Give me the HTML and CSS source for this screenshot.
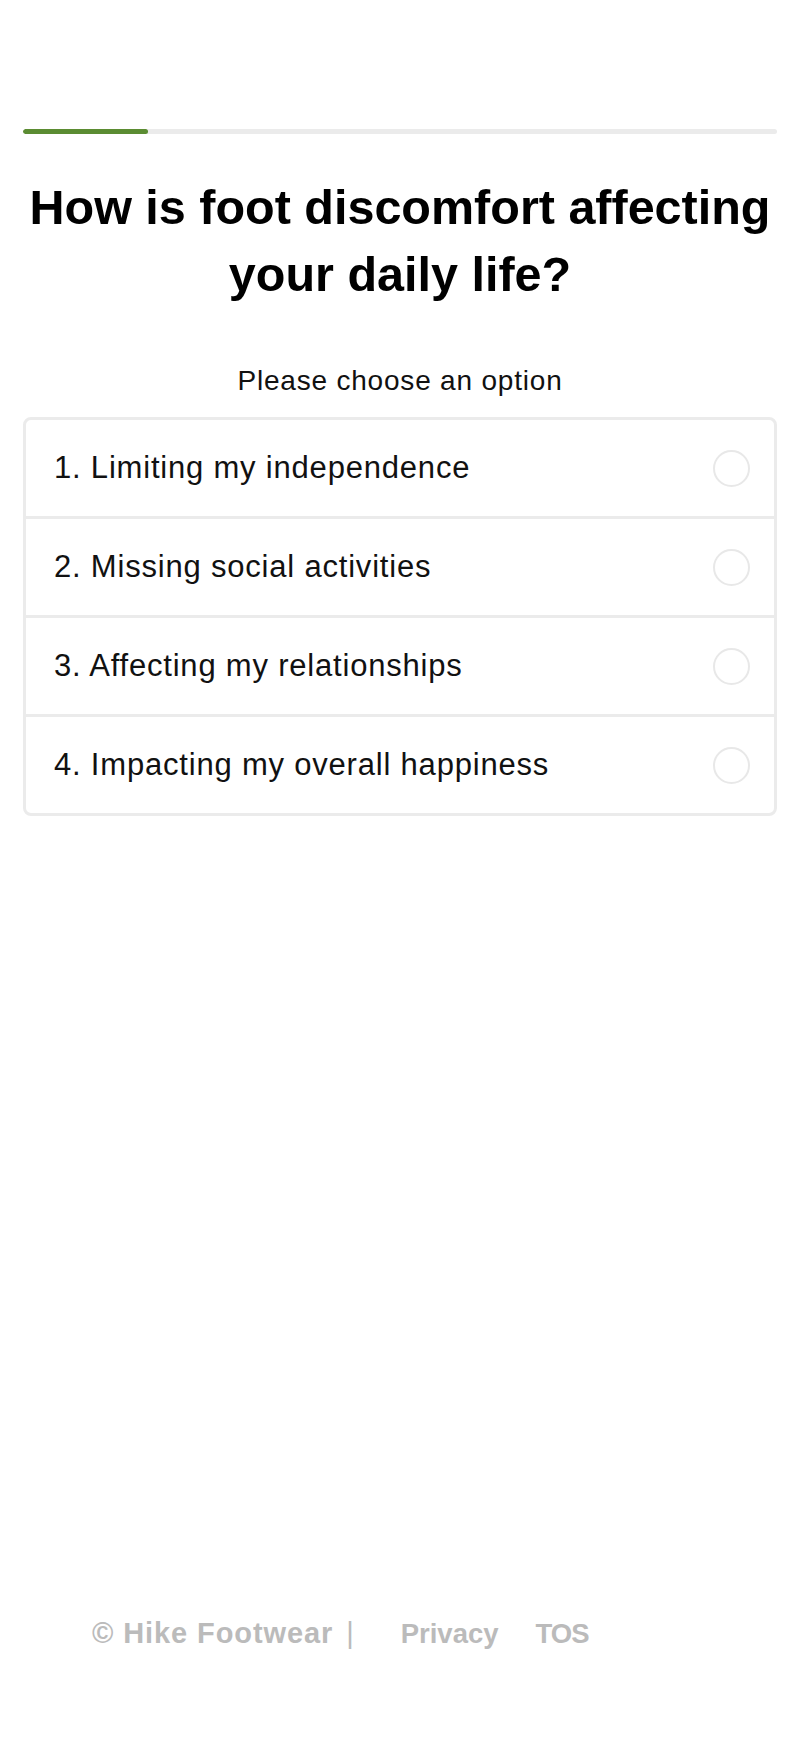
FILE: index.html
```html
<!DOCTYPE html>
<html lang="en">
<head>
    <meta charset="UTF-8">
    <meta name="viewport" content="width=device-width, initial-scale=1.0">
    <title>Hike Footwear Quiz</title>
    <link rel="stylesheet" href="styles.css">
</head>
<body>

<div class="page">
    <div class="quiz">
        <div class="progress">
            <div class="progress-fill" style="width: 16.6%"></div>
        </div>

        <h1 class="question">How is foot discomfort affecting your daily life?</h1>
        <div class="hint">Please choose an option</div>

        <div class="options">
            <label class="option">
                <span class="option-text">1. Limiting my independence</span>
                <span class="radio"></span>
            </label>
            <label class="option">
                <span class="option-text">2. Missing social activities</span>
                <span class="radio"></span>
            </label>
            <label class="option">
                <span class="option-text">3. Affecting my relationships</span>
                <span class="radio"></span>
            </label>
            <label class="option">
                <span class="option-text">4. Impacting my overall happiness</span>
                <span class="radio"></span>
            </label>
        </div>
    </div>

    <div class="footer">
        <span class="copyright">&copy; Hike Footwear</span>
        <span class="divider">|</span>
        <a class="footer-link privacy" href="#">Privacy</a>
        <a class="footer-link tos" href="#">TOS</a>
    </div>
</div>

<script>
    // Select an option
    const options = document.querySelectorAll('.option');
    options.forEach(option => option.addEventListener('click', () => {
        options.forEach(o => o.classList.remove('selected'));
        option.classList.add('selected');
    }));
</script>

</body>
</html>
```

FILE: styles.css
```css
body {
    font-family: "Liberation Sans", Arial, sans-serif;
    margin: 0;
    background-color: #fff;
    color: #111;
}
.page {
    min-height: 100vh;
    display: flex;
    flex-direction: column;
}
.quiz {
    padding: 129px 23px 0;
}
.progress {
    height: 5px;
    border-radius: 3px;
    background-color: #ebebeb;
    overflow: hidden;
}
.progress-fill {
    height: 100%;
    background-color: #5b8c32;
    border-radius: 3px;
}
.question {
    margin: 40px 0 0;
    font-size: 48.5px;
    line-height: 67px;
    font-weight: bold;
    text-align: center;
    color: #000;
}
.hint {
    margin-top: 56px;
    font-size: 28px;
    line-height: 34px;
    letter-spacing: 0.8px;
    text-align: center;
}
.options {
    margin-top: 19px;
    border: 3px solid #ebebeb;
    border-radius: 8px;
}
.option {
    height: 96px;
    display: flex;
    align-items: center;
    justify-content: space-between;
    padding: 0 24px 0 28px;
    border-bottom: 3px solid #ebebeb;
    cursor: pointer;
}
.option:last-child {
    border-bottom: none;
}
.option-text {
    font-size: 31px;
    letter-spacing: 0.8px;
}
.radio {
    width: 33px;
    height: 33px;
    border: 2px solid #e8e8e8;
    border-radius: 50%;
}
.option.selected .radio {
    border-color: #5b8c32;
    background-color: #5b8c32;
}
.footer {
    margin-top: auto;
    display: flex;
    align-items: baseline;
    padding: 0 0 97px 92px;
    line-height: 40px;
    color: #bbb;
    font-weight: bold;
}
.copyright {
    font-size: 29px;
    letter-spacing: 0.9px;
}
.divider {
    font-size: 29px;
    font-weight: normal;
    margin-left: 13px;
}
.footer-link {
    font-size: 27.5px;
    color: #bbb;
    text-decoration: none;
}
.privacy {
    margin-left: 47px;
}
.tos {
    margin-left: 37px;
    letter-spacing: -1px;
}
```
